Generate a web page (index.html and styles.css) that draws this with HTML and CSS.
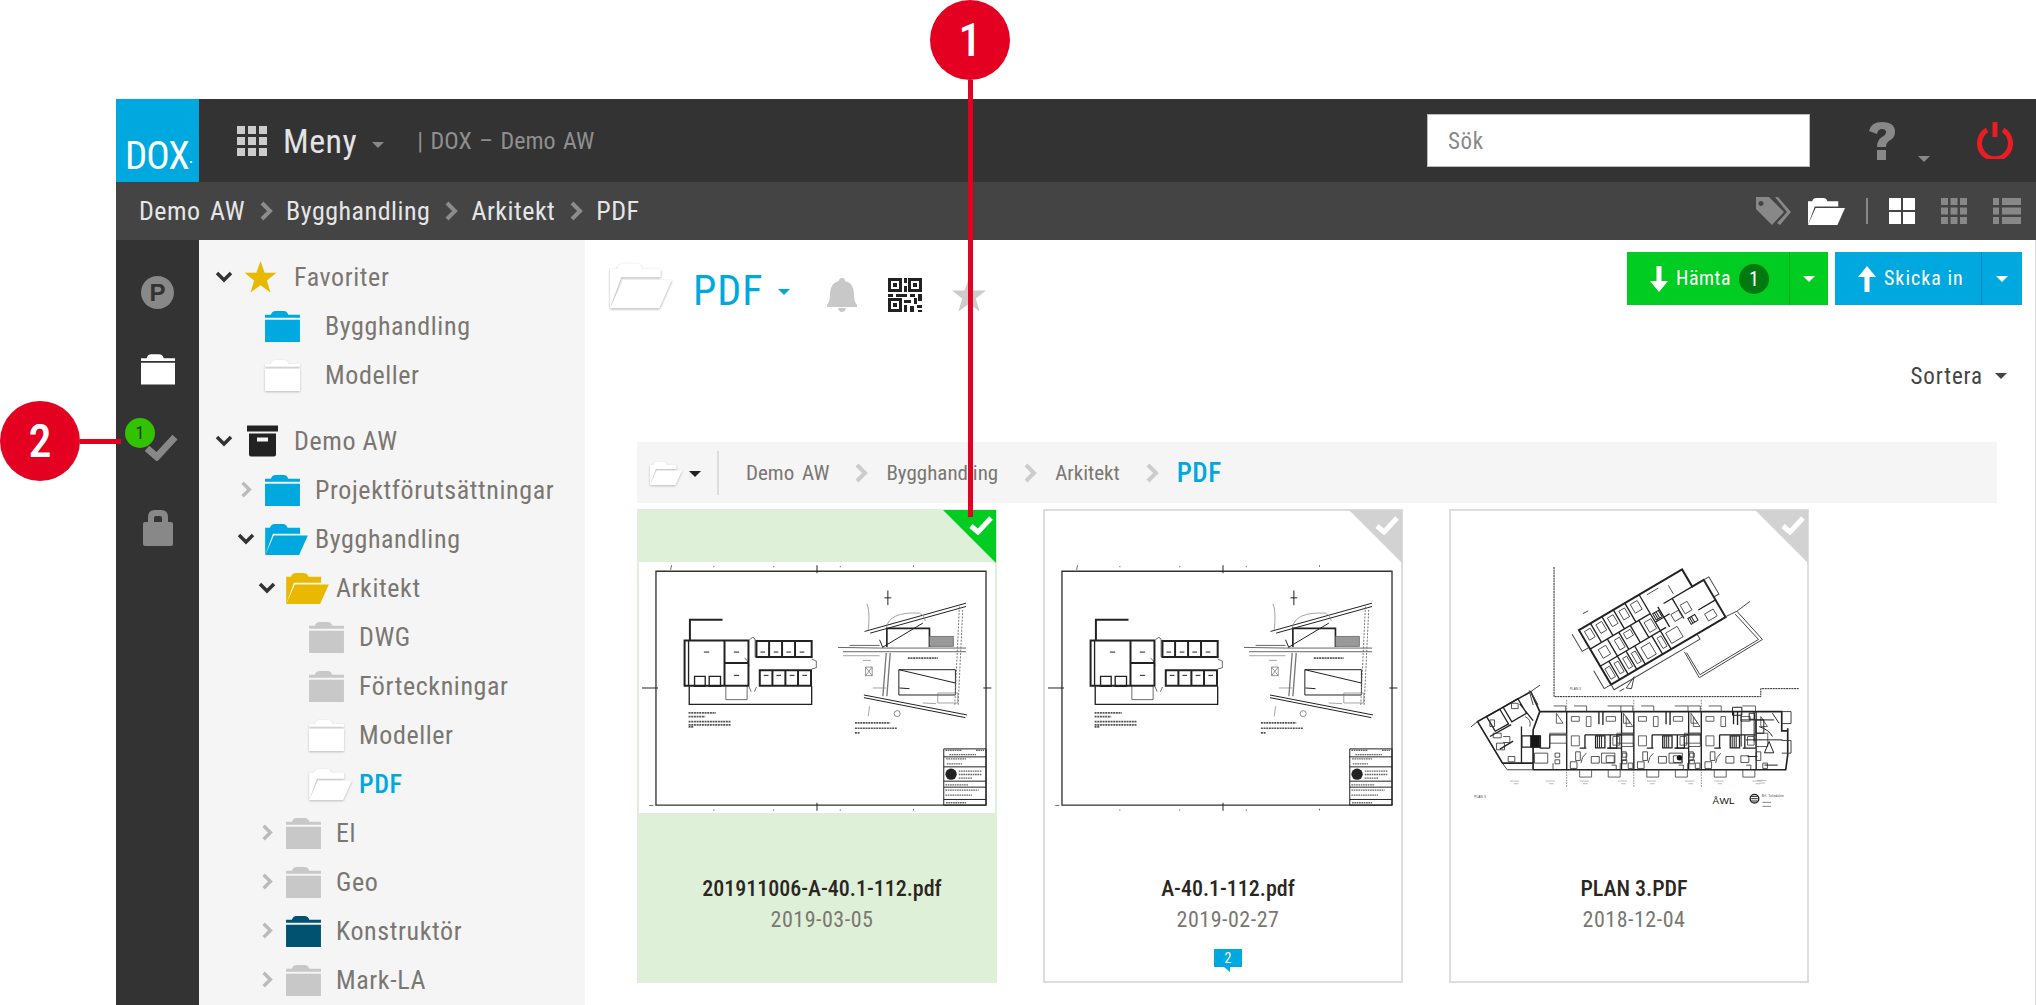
FILE: index.html
```html
<!doctype html>
<html lang="sv">
<head>
    <meta charset="UTF-8">
    <title>DOX - Demo AW</title>
    <link rel="stylesheet" href="styles.css">
</head>
<body>

<svg class="sprite" aria-hidden="true">
    <symbol id="folder" viewBox="0 0 36 33">
        <path d="M6 5q1-4 5-4h8q4 0 5 4h12v3H0V5z"/>
        <path d="M0 10h36v23H0z"/>
    </symbol>
    <symbol id="folder-open" viewBox="0 0 44 33">
        <path d="M0 33V5h5q1-4 5-4h8q4 0 5 4h13v6H8z"/>
        <path d="M9 13h35l-9 20H0z"/>
    </symbol>
    <symbol id="box" viewBox="0 0 31 31">
        <path d="M0 0h31v6H0z"/>
        <path fill-rule="evenodd" d="M2 8h27v21q0 2-2 2H4q-2 0-2-2zM10 12v4h11v-4z"/>
    </symbol>
    <symbol id="star" viewBox="0 0 34 34">
        <path d="M17 0l4.400 12.600H34l-10.200 8 3.800 13L17 25.800l-10.600 7.800 3.800-13L0 12.600h12.600z"/>
    </symbol>
    <symbol id="chev-right" viewBox="0 0 14 20">
        <path d="M3 2l8 8-8 8" fill="none" stroke="currentColor" stroke-width="4"/>
    </symbol>
    <symbol id="chev-down" viewBox="0 0 18 12">
        <path d="M2 2l7 7 7-7" fill="none" stroke="currentColor" stroke-width="3.500"/>
    </symbol>
    <symbol id="check" viewBox="0 0 24 20">
        <path d="M2 11l7 6L22 3" fill="none" stroke="currentColor" stroke-width="5"/>
    </symbol>

    <symbol id="plan-a" viewBox="27 367 1070 753">
        <g fill="none" stroke="#222" stroke-width="2">
            <path d="M78 394h992v703H78z" stroke-width="4" stroke="#333"/>
            <path d="M562 376v24M562 1090v24M36 745h48M1062 745h24" stroke-width="3"/>
            <path d="M125 376l-3 14M252 378v4M432 378v4M632 378v4M852 376v5M252 1110v4M432 1110v4M632 1110v4M852 1108v5M58 1098h12"/>
            <g stroke-width="6">
                <path d="M180 600v-60h98M164 602h192v136H164zM284 604v134M284 670h72M380 604h166v48H380zM418 604v48M457 604v48M496 604v48"/>
                <path d="M390 692h154v46H390zM428 692v46M467 692v46M505 692v46"/>
            </g>
            <path d="M178 740v54h368v-54M194 710h32v30h-32zM238 710h34v30h-34zM176 602v136" stroke-width="4"/>
            <path d="M288 740v40h64v-40M360 600q10-14 16 0v52M344 655q10 4 14 24M546 658l14 6v20l-14 4M358 742l6 14M380 742l-6 14" stroke-width="2"/>
            <path d="M176 820h82M176 831h50M176 846h128M176 856h128M176 862h14" stroke-width="5" stroke-dasharray="6 2" stroke="#555"/>
            <path d="M222 637h16M312 637h16M312 707h16M392 637h14M432 637h14M470 637h14M510 637h14M402 707h14M440 707h14M480 707h14M518 707h14" stroke-width="3"/>

            <path d="M705 575l305-85M722 580l288-80M775 452v44M765 474h20" stroke-width="3"/>
            <path d="M625 623l125 2h260M660 617h90M640 636h370" stroke-width="3" stroke="#666"/>
            <path d="M750 600l10 24M760 622l120-72" stroke-width="3"/>
            <path d="M772 622v-56h128v56" stroke-width="5"/>
            <path d="M900 590h72v30h-72z" fill="#999" stroke="#555"/>
            <path d="M770 640l-10 130M782 640l-10 130" stroke-width="4" stroke="#777"/>
            <path d="M808 690h170v76H808zM808 690l170 40M810 745l30 2" stroke-width="3"/>
            <path d="M703 766l310 60M703 774l305 60" stroke-width="3"/>
            <path d="M990 500l-14 300M1000 510l-14 290" stroke-width="3" stroke="#777" stroke-dasharray="6 4"/>
            <path d="M708 682h20v26h-20zM708 682l20 26M728 682l-20 26" stroke-width="2" stroke="#666"/>
            <path d="M770 565q8-50 100-45q14 6 18 24M712 492q10 20 4 80M640 648h110M700 662h24M730 745h40M925 760h60v30h-60zM720 800l-4 30M880 790l40 2" stroke-width="2" stroke="#777"/>
            <path d="M835 655h90M676 850h106M676 866h128M676 880h14" stroke-width="5" stroke-dasharray="6 2" stroke="#555"/>
            <circle cx="803" cy="822" r="9" stroke-width="2" stroke="#555"/>

            <path d="M943 928h127v169H943zM943 952h127M943 982h127M943 1025h127M943 1043h127M943 1080h127" stroke-width="3"/>
            <path d="M948 932h50M1040 932h24M960 945h80M950 958h60M952 973h46M988 995h70M988 1005h70M988 1016h40M948 1036h70M948 1052h100M948 1067h80M950 1090h60" stroke-width="4" stroke-dasharray="5 2" stroke="#666"/>
            <circle cx="965" cy="1004" r="17" fill="#222" stroke="none"/>
        </g>
    </symbol>

    <symbol id="plan-b" viewBox="33 186 1071 753">
        <g fill="none" stroke="#222">
            <path d="M343 200v390h622v-24h116" stroke-width="3" stroke-dasharray="6 2"/>
            <path d="M381 600v262M583 600v262M786 600v262" stroke-width="2" stroke-dasharray="5 3" stroke="#555"/>

            <g transform="translate(418 390) rotate(-30.500)">
                <path d="M0 0h360v60h40v130H0z" stroke-width="6"/>
                <path d="M-24 0v60H0M-24 128v62H0M0 190v18h300v-18M400 60h18v60h-18" stroke-width="3" stroke="#444"/>
                <path d="M0 66h210M0 126h230M210 0v190M140 66v60M60 66v124M120 126v64M260 60h100M290 60v70M340 130h60M40 0v66M80 0v66M120 0v66M160 0v66M170 66v60M100 66v60M30 126v64M90 126v64M180 126v64M240 60v70M210 96h50" stroke-width="4"/>
                <path d="M12 12h20v30H12zM52 12h20v30H52zM92 12h20v30H92zM132 12h20v30h-20zM172 12h24v30h-24zM20 80h26v30H20zM76 80h18v34H76zM110 76h24v20h-24zM180 80h24v34h-24zM8 140h16v36H8zM40 140h14v36H40zM70 140h14v36H70zM100 140h14v36h-14zM134 140h30v40h-30zM190 140h14v36h-14zM220 140h40v36h-40zM300 90h24v30h-24zM350 150h30v24h-30zM230 12h40M300 20v30M262 100h26v24h-26z" stroke-width="2.500" stroke="#444"/>
                <path d="M216 70h20v22h-20zM222 70v22M228 70v22M300 136h24v20h-24zM306 136v20M312 136v20" stroke-width="3"/>
            </g>
            <path d="M893 333l77 85-190 115-45-78M888 342l70 76-176 106-40-66M893 333l-35 17M893 333l40-30M560 564l24-34-8 36zM430 340l16-8M540 574l14-8" stroke-width="3" stroke="#444"/>

            <path d="M300 635h728v58h18v-8M1046 685v80l-6 45H280" stroke-width="5"/>
            <path d="M280 810V690l20-55M300 635l-27-60-160 90 75 125h92" stroke-width="5"/>
            <path d="M273 575l22 40M113 665l-20 16M273 575l28-20M280 615l-12-44M1028 635h28v36h-28M1028 722h28v38h-28M188 790l14 20h78" stroke-width="3" stroke="#444"/>
            <path d="M140 650l26 44 40-22-26-44zM190 622l26 44 44-26-26-44zM150 710l64-36M180 748l40-24M240 612l40 50M245 680v110" stroke-width="4"/>
            <path d="M150 660h14v20h-14zM170 730h24v20h-24zM205 770h20v16h-20zM215 610h20v16h-20zM256 650q20 10 14 30M160 700h24v14h-24zM190 710h20v18h-20" stroke-width="2.500" stroke="#333"/>
            <path d="M246 708h56v34h-56z" stroke-width="4"/>
            <path d="M272 708h28v34h-28zM276 708v34M282 708v34M288 708v34M294 708v34" fill="#111" stroke-width="2"/>

            <g id="unit">
                <path d="M381 635v175M330 705h50M436 705h108M478 635v38M490 635v40M546 635v175M330 705v40M436 705v40M512 705v40M420 745h20M300 745h30M506 745h40" stroke-width="4"/>
                <path d="M342 618h36v17M403 618h38v17M504 618h40v17M420 810v22h36v-22M506 810v22h36v-22M330 700h50v30h-50zM545 700h36v40h-36zM440 650h14v30h-14zM560 650l20 30-20 0zM350 640l20 30-20 0zM395 650h24v14h-24zM500 650h28v14h-28zM395 708h24v30h-24zM520 710h20v26h-20z" stroke-width="2.500" stroke="#444"/>
                <path d="M468 708h28v36h-28z" stroke-width="4"/>
                <path d="M474 708v36M480 708v36M486 708v36" stroke-width="3"/>
                <path d="M284 760h40v30h-40zM346 760h14v12h-14zM346 780h14v12h-14zM408 756h14v26h-14zM455 770h24v20h-24zM500 768h24v20h-24zM546 756h14v26h-14zM440 760q-14 10-16 30M340 790v20M516 796h14v14M392 786h20v20h-20zM566 790h14v16h-14z" stroke-width="2.500" stroke="#333"/>
                <path d="M420 844h28M430 852h14M535 844h28M545 852h14" stroke-width="2" stroke="#999"/>
            </g>
            <use href="#unit" x="202"/>
            <use href="#unit" x="405"/>
            <path d="M880 622h28v24h-28zM945 635v90M905 660h100M920 720h110M1000 640l20 30M960 680q30 10 40 30M990 725l-14 34h28zM925 770h30M976 796h40M906 640v100M950 660h24v40h-24zM930 640h16v18h-16z" stroke-width="3"/>
            <circle cx="720" cy="774" r="8" fill="#111" stroke="none"/>
            <path d="M210 844h28M222 852h14M318 844h28M328 852h14M954 842h28M964 850h14" stroke-width="2" stroke="#999"/>
            <circle cx="946" cy="897" r="13" stroke-width="4"/>
            <path d="M936 890h20M936 897h20M936 904h20" stroke-width="3"/>
            <path d="M970 908h26M970 920h26" stroke-width="3" stroke="#888"/>
        </g>
        <text x="390" y="569" class="plan-label">PLAN 3</text>
        <text x="103" y="896" class="plan-label">PLAN 3</text>
        <text x="968" y="892" class="plan-label">Brf. Tulindalen</text>
        <text x="820" y="912" class="plan-logo">ÅWL</text>
    </symbol>
</svg>

<div class="app">
    <header class="topbar">
        <div class="logo">DOX<span class="logo-dot">·</span></div>
        <svg class="apps" viewBox="0 0 30 30" fill="#ccc"><path d="M0 0h8v8H0zM11 0h8v8h-8zM22 0h8v8h-8zM0 11h8v8H0zM11 11h8v8h-8zM22 11h8v8h-8zM0 22h8v8H0zM11 22h8v8h-8zM22 22h8v8h-8z"/></svg>
        <span class="menu-label">Meny</span>
        <span class="caret caret-grey caret-menu"></span>
        <span class="app-title">| DOX – Demo AW</span>
        <div class="search">Sök</div>
        <svg class="help" viewBox="0 0 28 38" fill="#888"><path d="M1 9Q3 0 14 0q13 0 13 10 0 6-6 9-3 2-3 6H9q0-7 5-10 4-2 4-5t-4-3q-4 0-5 5zM9 28h9v10H9z"/></svg>
        <span class="caret caret-grey caret-help"></span>
        <svg class="power" viewBox="0 0 36 37" fill="none" stroke="#ea1c24" stroke-width="5"><path d="M10 8a15.500 15.500 0 1 0 16 0M18 0v15"/></svg>
    </header>

    <div class="crumbbar">
        <nav class="crumbs">
            <span>Demo AW</span>
            <svg class="crumb-chev"><use href="#chev-right"/></svg>
            <span>Bygghandling</span>
            <svg class="crumb-chev"><use href="#chev-right"/></svg>
            <span>Arkitekt</span>
            <svg class="crumb-chev"><use href="#chev-right"/></svg>
            <span>PDF</span>
        </nav>
        <div class="view-tools">
            <svg class="tool-tag" viewBox="0 0 35 28" fill="#888">
                <path fill-rule="evenodd" d="M0 0h13l15 15-12 13L0 12zM5 4a2.500 2.500 0 1 0 .01 0z"/>
                <path d="M19 0h3l13 15-11 13-3-2 10-11z"/>
            </svg>
            <svg class="tool-folder"><use href="#folder-open"/></svg>
            <span class="tool-sep"></span>
            <svg class="tool-view" viewBox="0 0 26 26" fill="#fff"><path d="M0 0h12v12H0zM14 0h12v12H14zM0 14h12v12H0zM14 14h12v12H14z"/></svg>
            <svg class="tool-view" viewBox="0 0 26 26" fill="#888"><path d="M0 0h7v7H0zM9.500 0h7v7h-7zM19 0h7v7h-7zM0 9.500h7v7H0zM9.500 9.500h7v7h-7zM19 9.500h7v7h-7zM0 19h7v7H0zM9.500 19h7v7h-7zM19 19h7v7h-7z"/></svg>
            <svg class="tool-list" viewBox="0 0 28 26" fill="#888"><path d="M0 0h6v7H0zM9 0h19v7H9zM0 9.500h6v7H0zM9 9.500h19v7H9zM0 19h6v7H0zM9 19h19v7H9z"/></svg>
        </div>
    </div>

    <div class="workspace">
        <aside class="rail">
            <div class="rail-p">P</div>
            <svg class="rail-folder"><use href="#folder"/></svg>
            <svg class="rail-check"><use href="#check"/></svg>
            <svg class="rail-lock" viewBox="0 0 30 36" fill="#888"><path fill-rule="evenodd" d="M5 12V7q0-7 7-7h6q7 0 7 7v5h3q2 0 2 2v20q0 2-2 2H2q-2 0-2-2V14q0-2 2-2zM11 12h8V8q0-2-2-2h-4q-2 0-2 2z"/></svg>
            <span class="rail-count">1</span>
        </aside>

        <aside class="tree">
            <div class="row lvl0">
                <svg class="chev down"><use href="#chev-down"/></svg>
                <svg class="ico ico-star"><use href="#star"/></svg>
                <span>Favoriter</span>
            </div>
            <div class="row fav">
                <svg class="ico blue"><use href="#folder"/></svg>
                <span>Bygghandling</span>
            </div>
            <div class="row fav">
                <svg class="ico white"><use href="#folder"/></svg>
                <span>Modeller</span>
            </div>

            <div class="row lvl0 first">
                <svg class="chev down"><use href="#chev-down"/></svg>
                <svg class="ico ico-box"><use href="#box"/></svg>
                <span>Demo AW</span>
            </div>
            <div class="row lvl1">
                <svg class="chev right"><use href="#chev-right"/></svg>
                <svg class="ico blue"><use href="#folder"/></svg>
                <span>Projektförutsättningar</span>
            </div>
            <div class="row lvl1">
                <svg class="chev down"><use href="#chev-down"/></svg>
                <svg class="ico open blue"><use href="#folder-open"/></svg>
                <span>Bygghandling</span>
            </div>
            <div class="row lvl2">
                <svg class="chev down"><use href="#chev-down"/></svg>
                <svg class="ico open yellow"><use href="#folder-open"/></svg>
                <span>Arkitekt</span>
            </div>
            <div class="row lvl3">
                <svg class="ico grey"><use href="#folder"/></svg>
                <span>DWG</span>
            </div>
            <div class="row lvl3">
                <svg class="ico grey"><use href="#folder"/></svg>
                <span>Förteckningar</span>
            </div>
            <div class="row lvl3">
                <svg class="ico white"><use href="#folder"/></svg>
                <span>Modeller</span>
            </div>
            <div class="row lvl3">
                <svg class="ico open white"><use href="#folder-open"/></svg>
                <span class="current">PDF</span>
            </div>
            <div class="row lvl2">
                <svg class="chev right"><use href="#chev-right"/></svg>
                <svg class="ico grey"><use href="#folder"/></svg>
                <span>El</span>
            </div>
            <div class="row lvl2">
                <svg class="chev right"><use href="#chev-right"/></svg>
                <svg class="ico grey"><use href="#folder"/></svg>
                <span>Geo</span>
            </div>
            <div class="row lvl2">
                <svg class="chev right"><use href="#chev-right"/></svg>
                <svg class="ico navy"><use href="#folder"/></svg>
                <span>Konstruktör</span>
            </div>
            <div class="row lvl2">
                <svg class="chev right"><use href="#chev-right"/></svg>
                <svg class="ico grey"><use href="#folder"/></svg>
                <span>Mark-LA</span>
            </div>
        </aside>

        <main class="content">
            <div class="content-head">
                <div class="title-group">
                    <svg class="title-folder"><use href="#folder-open"/></svg>
                    <span class="title">PDF</span>
                    <span class="caret caret-blue"></span>
                    <svg class="bell" viewBox="0 0 30 34" fill="#c8c8c8"><path d="M15 0q3 0 3 3 9 2 9 13 0 8 3 11v2H0v-2q3-3 3-11Q3 5 12 3q0-3 3-3zM11 30h8q-1 4-4 4t-4-4z"/></svg>
                    <svg class="qr" viewBox="0 0 34 34">
                        <path fill="#222" d="M0 0h14v14H0zM20 0h14v14H20zM0 20h14v14H0z"/>
                        <path fill="#fff" d="M3 3h8v8H3zM23 3h8v8h-8zM3 23h8v8H3z"/>
                        <path fill="#222" d="M5 5h4v4H5zM25 5h4v4h-4zM5 25h4v4H5zM16 0h3v5h-3zM16 8h3v6h-3zM0 16h5v3H0zM8 16h11v3H8zM22 16h5v3h-5zM30 16h4v7h-4zM16 22h7v3h-7zM26 20h3v6h-3zM16 27h3v7h-3zM22 28h4v6h-4zM29 27h5v3h-5zM30 32h4v2h-4z"/>
                    </svg>
                    <svg class="title-star"><use href="#star"/></svg>
                </div>
                <div class="actions">
                    <div class="btn btn-green">
                        <span class="btn-main">
                            <svg class="btn-arrow" viewBox="0 0 18 26" fill="#fff"><path d="M6.500 0h5v15H18l-9 11-9-11h6.500z"/></svg>
                            Hämta
                            <span class="pill">1</span>
                        </span>
                        <span class="btn-drop"><span class="caret caret-white"></span></span>
                    </div>
                    <div class="btn btn-blue">
                        <span class="btn-main">
                            <svg class="btn-arrow" viewBox="0 0 18 26" fill="#fff"><path d="M6.500 26h5V11H18L9 0 0 11h6.500z"/></svg>
                            Skicka in
                        </span>
                        <span class="btn-drop"><span class="caret caret-white"></span></span>
                    </div>
                </div>
            </div>

            <div class="sort">Sortera <span class="caret caret-dark"></span></div>

            <div class="path">
                <svg class="path-folder"><use href="#folder-open"/></svg>
                <span class="caret caret-black"></span>
                <span class="path-sep"></span>
                <span>Demo AW</span>
                <svg class="path-chev"><use href="#chev-right"/></svg>
                <span>Bygghandling</span>
                <svg class="path-chev"><use href="#chev-right"/></svg>
                <span>Arkitekt</span>
                <svg class="path-chev"><use href="#chev-right"/></svg>
                <span class="path-current">PDF</span>
            </div>

            <div class="cards">
                <article class="card selected">
                    <span class="corner"><svg class="corner-check"><use href="#check"/></svg></span>
                    <svg class="thumb"><use href="#plan-a"/></svg>
                    <div class="card-name">201911006-A-40.1-112.pdf</div>
                    <div class="card-date">2019-03-05</div>
                </article>
                <article class="card">
                    <span class="corner"><svg class="corner-check"><use href="#check"/></svg></span>
                    <svg class="thumb"><use href="#plan-a"/></svg>
                    <div class="card-name">A-40.1-112.pdf</div>
                    <div class="card-date">2019-02-27</div>
                    <div class="comment">2</div>
                </article>
                <article class="card">
                    <span class="corner"><svg class="corner-check"><use href="#check"/></svg></span>
                    <svg class="thumb"><use href="#plan-b"/></svg>
                    <div class="card-name">PLAN 3.PDF</div>
                    <div class="card-date">2018-12-04</div>
                </article>
            </div>
        </main>
    </div>
</div>

<!-- utpekningar ovanpå skärmbilden -->
<div class="callout callout-one">1</div>
<div class="callout-line line-one"></div>
<div class="callout callout-two">2</div>
<div class="callout-line line-two"></div>

</body>
</html>
```

FILE: styles.css
```css
* {
    box-sizing: border-box;
}

html, body {
    height: 1005px;
    overflow: hidden;
}

body {
    margin: 0;
    padding: 99px 0 0 116px;
    background: #fff;
    color: #7a7672;
    font-family: Roboto, sans-serif;
    font-stretch: 75%;
    font-size: 26px;
    letter-spacing: 0.6px;
}

.sprite {
    display: none;
}

.app {
    display: flex;
    flex-direction: column;
    height: 906px;
}

/* topbar */
.topbar {
    display: flex;
    align-items: center;
    flex: 0 0 83px;
    padding-right: 23px;
    background: #333;
}

.logo {
    flex: 0 0 83px;
    height: 83px;
    padding: 34px 0 0 9px;
    background: #00a8e0;
    color: #fff;
    font-size: 39px;
    line-height: 46px;
    letter-spacing: -1px;
    white-space: nowrap;
}

.logo-dot {
    font-size: 18px;
    letter-spacing: 0;
}

.apps {
    width: 30px;
    height: 30px;
    margin-left: 38px;
}

.menu-label {
    margin-left: 16px;
    color: #e4e4e4;
    font-size: 34px;
    letter-spacing: 0.5px;
}

.caret {
    display: inline-block;
    width: 0;
    height: 0;
    border-left: 6px solid transparent;
    border-right: 6px solid transparent;
    border-top: 6px solid #888;
}

.caret-menu {
    margin: 8px 0 0 15px;
}

.app-title {
    margin-left: 33px;
    color: #8f8f8f;
    font-size: 24px;
    letter-spacing: 0;
    word-spacing: 2px;
}

.search {
    width: 383px;
    height: 53px;
    margin-left: auto;
    padding-left: 20px;
    border: 1px solid #bbb;
    background: #fff;
    color: #888;
    font-size: 23px;
    line-height: 54px;
}

.help {
    width: 28px;
    height: 38px;
    margin-left: 58px;
}

.caret-help {
    margin: 36px 0 0 22px;
}

.power {
    width: 36px;
    height: 37px;
    margin-left: 47px;
}

/* crumb bar */
.crumbbar {
    display: flex;
    align-items: center;
    flex: 0 0 58px;
    padding: 0 15px 0 23px;
    background: #444;
}

.crumbs {
    display: flex;
    align-items: center;
    color: #e6e6e6;
    font-size: 26px;
    letter-spacing: 0.5px;
    word-spacing: 3px;
}

.crumb-chev {
    width: 14px;
    height: 20px;
    margin: 0 13px 0 14px;
    color: #8c8c8c;
}

.view-tools {
    display: flex;
    align-items: center;
    margin-left: auto;
}

.tool-tag {
    width: 35px;
    height: 28px;
}

.tool-folder {
    width: 37px;
    height: 28px;
    margin-left: 17px;
    fill: #fff;
}

.tool-sep {
    width: 2px;
    height: 26px;
    margin: 0 21px;
    background: #888;
}

.tool-view {
    width: 26px;
    height: 26px;
    margin-right: 26px;
}

.tool-list {
    width: 28px;
    height: 26px;
}

/* left rail */
.workspace {
    display: flex;
    flex: 1;
    min-height: 0;
}

.rail {
    position: relative;
    display: flex;
    flex-direction: column;
    align-items: center;
    flex: 0 0 83px;
    padding-top: 36px;
    background: #333;
}

.rail-p {
    width: 33px;
    height: 33px;
    border-radius: 50%;
    background: #888;
    color: #333;
    font: bold 24px/33px "Liberation Sans", sans-serif;
    letter-spacing: 0;
    text-align: center;
}

.rail-folder {
    width: 34px;
    height: 32px;
    margin-top: 44px;
    fill: #fff;
}

.rail-check {
    width: 34px;
    height: 28px;
    margin: 48px 0 0 6px;
    color: #888;
}

.rail-lock {
    width: 30px;
    height: 36px;
    margin-top: 49px;
}

.rail-count {
    position: absolute;
    top: 178px;
    left: 9px;
    width: 30px;
    height: 30px;
    border-radius: 50%;
    background: #33c200;
    color: #1c3a12;
    font-size: 18px;
    line-height: 30px;
    letter-spacing: 0;
    text-align: center;
}

/* folder tree */
.tree {
    flex: 0 0 386px;
    padding-top: 12px;
    background: #f5f5f5;
    overflow: hidden;
}

.row {
    display: flex;
    align-items: center;
    height: 49px;
    white-space: nowrap;
}

.row.first {
    margin-top: 17px;
}

.lvl0 {
    padding-left: 16px;
}

.lvl1 {
    padding-left: 38px;
}

.lvl2 {
    padding-left: 59px;
}

.lvl3 {
    padding-left: 110px;
}

.fav {
    padding-left: 66px;
}

.chev {
    flex: 0 0 18px;
    height: 12px;
    margin-right: 10px;
}

.lvl0 .chev {
    margin-right: 14px;
}

.chev.down {
    color: #333;
}

.chev.right {
    height: 17px;
    color: #bbb;
}

.ico {
    flex: 0 0 35px;
    width: 35px;
    height: 32px;
    margin-right: 15px;
}

.fav .ico {
    margin-right: 25px;
}

.ico.open {
    flex-basis: 43px;
    width: 43px;
    margin-right: 7px;
}

.ico-star {
    flex-basis: 33px;
    width: 33px;
    margin: 0 17px 0 -3px;
    fill: #e8b900;
}

.ico-box {
    flex-basis: 31px;
    width: 31px;
    margin-right: 16px;
    fill: #222;
}

.blue {
    fill: #00a8e0;
}

.yellow {
    fill: #e8b900;
}

.grey {
    fill: #c8c8c8;
}

.navy {
    fill: #005270;
}

.white {
    fill: #fff;
    filter: drop-shadow(0 1px 1px #bbb);
}

.current {
    color: #00a8e0;
    font-weight: 500;
}

/* content */
.content {
    flex: 1;
    min-width: 0;
    padding-top: 12px;
    border-right: 1px solid #ddd;
}

.content-head {
    display: flex;
    justify-content: space-between;
    padding: 0 13px 0 25px;
}

.title-group {
    display: flex;
    align-items: center;
    height: 76px;
}

.title-folder {
    width: 62px;
    height: 50px;
    margin-bottom: 10px;
    fill: #fff;
    filter: drop-shadow(0 1px 1px #aaa);
}

.title {
    margin-left: 21px;
    color: #00a8e0;
    font-size: 42px;
    letter-spacing: 1px;
}

.caret-blue {
    margin: 4px 0 0 15px;
    border-top-color: #00a8e0;
}

.bell {
    width: 30px;
    height: 34px;
    margin: 10px 0 0 37px;
}

.qr {
    width: 34px;
    height: 34px;
    margin: 10px 0 0 31px;
}

.title-star {
    width: 34px;
    height: 34px;
    margin: 10px 0 0 30px;
    fill: #ccc;
}

.actions {
    display: flex;
    gap: 7px;
}

.btn {
    display: flex;
    height: 53px;
    color: #fff;
    font-size: 20px;
    line-height: 53px;
    letter-spacing: 0.5px;
}

.btn-green {
    background: #00cc22;
}

.btn-blue {
    background: #00a8e0;
    letter-spacing: 1px;
}

.btn-main {
    display: flex;
    align-items: center;
    gap: 8px;
    padding-left: 23px;
}

.btn-green .btn-main {
    width: 162px;
}

.btn-blue .btn-main {
    width: 146px;
}

.btn-arrow {
    width: 18px;
    height: 26px;
}

.pill {
    width: 30px;
    height: 30px;
    border-radius: 50%;
    background: #007a10;
    font-size: 20px;
    line-height: 30px;
    letter-spacing: 0;
    text-align: center;
}

.btn-drop {
    display: flex;
    align-items: center;
    justify-content: center;
    width: 39px;
    border-left: 1px solid rgba(0, 0, 0, 0.18);
}

.btn-blue .btn-drop {
    width: 41px;
}

.caret-white {
    border-top-color: #fff;
}

.sort {
    display: flex;
    align-items: center;
    justify-content: flex-end;
    gap: 12px;
    height: 36px;
    margin-top: 30px;
    padding-right: 28px;
    color: #444;
    font-size: 23px;
    letter-spacing: 0.9px;
}

.caret-dark {
    border-top-color: #444;
}

.path {
    display: flex;
    align-items: center;
    height: 61px;
    margin: 48px 38px 0 52px;
    padding-left: 13px;
    background: #f5f5f5;
    font-size: 21px;
    letter-spacing: 0;
    word-spacing: 3px;
}

.path-folder {
    width: 32px;
    height: 26px;
    fill: #fff;
    filter: drop-shadow(0 1px 1px #bbb);
}

.caret-black {
    margin: 3px 0 0 7px;
    border-top-color: #222;
}

.path-sep {
    width: 2px;
    height: 44px;
    margin: 0 27px 0 16px;
    background: #ddd;
}

.path-chev {
    width: 14px;
    height: 20px;
    margin: 0 18px 0 25px;
    color: #ccc;
}

.path-current {
    color: #00a8e0;
    font-size: 27px;
    font-weight: 500;
    letter-spacing: 0.5px;
}

.cards {
    display: flex;
    gap: 46px;
    margin: 6px 0 0 52px;
}

.card {
    position: relative;
    width: 360px;
    height: 474px;
    padding-top: 51px;
    border: 2px solid #ddd;
    background: #fff;
    text-align: center;
}

.card.selected {
    border-color: #dff0d8;
    background: #dff0d8;
}

.thumb {
    display: block;
    width: 356px;
    height: 251px;
    background: #fff;
}

.corner {
    position: absolute;
    top: -1px;
    right: -1px;
    width: 53px;
    height: 53px;
    background: #d2d2d2;
    clip-path: polygon(0 0, 100% 0, 100% 100%);
}

.selected .corner {
    background: #00cc22;
}

.corner-check {
    position: absolute;
    top: 5px;
    right: 3px;
    width: 24px;
    height: 20px;
    color: #fff;
}

.card-name {
    margin-top: 61px;
    padding-left: 10px;
    color: #2b2622;
    font-size: 22px;
    font-weight: 500;
    line-height: 30px;
    letter-spacing: 0;
}

.card-date {
    margin-top: 1px;
    padding-left: 10px;
    font-size: 22px;
    line-height: 30px;
    letter-spacing: 0.5px;
}

.comment {
    position: relative;
    left: 5px;
    width: 28px;
    height: 18px;
    margin: 14px auto 0;
    background: #00a8e0;
    color: #fff;
    font-size: 14px;
    line-height: 18px;
    letter-spacing: 0;
}

.comment::after {
    content: "";
    position: absolute;
    top: 18px;
    left: 10px;
    border-top: 5px solid #00a8e0;
    border-left: 6px solid transparent;
}

.plan-label {
    font: 9px "Liberation Sans", sans-serif;
    fill: #333;
}

.plan-logo {
    font: 30px "Liberation Sans", sans-serif;
    fill: #111;
}

/* callouts */
.callout {
    position: absolute;
    width: 80px;
    height: 80px;
    border-radius: 50%;
    background: #e30020;
    color: #fff;
    font-size: 46px;
    font-weight: 500;
    line-height: 80px;
    letter-spacing: 0;
    text-align: center;
}

.callout-one {
    top: 0;
    left: 930px;
}

.callout-two {
    top: 401px;
    left: 0;
}

.callout-line {
    position: absolute;
    background: #e30020;
}

.line-one {
    top: 80px;
    left: 968px;
    width: 5px;
    height: 437px;
}

.line-two {
    top: 439px;
    left: 80px;
    width: 41px;
    height: 5px;
}
```
